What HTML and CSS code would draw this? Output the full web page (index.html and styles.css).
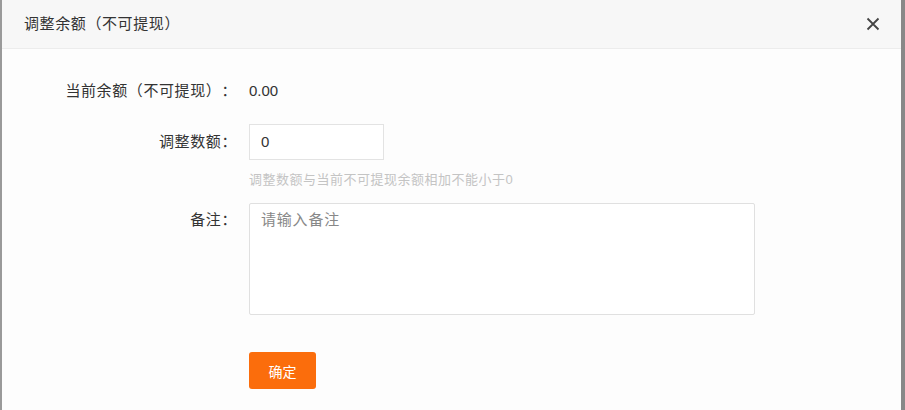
FILE: index.html
```html
<!DOCTYPE html>
<html lang="zh">
<head>
<meta charset="utf-8">
<link rel="stylesheet" href="styles.css">
</head>
<body>
<div class="dialog">
  <div class="dialog-header">
    <span class="dialog-title">调整余额（不可提现）</span>
    <button class="close" aria-label="关闭">
      <svg width="14" height="14" viewBox="0 0 14 14"><path d="M1.5 1.5 L12.5 12.5 M12.5 1.5 L1.5 12.5" stroke="#444" stroke-width="1.8" fill="none"/></svg>
    </button>
  </div>
  <div class="dialog-body">
    <div class="form-row row-static">
      <label class="label">当前余额（不可提现）：</label>
      <div class="control"><span class="value">0.00</span></div>
    </div>
    <div class="form-row row-amount">
      <label class="label">调整数额：</label>
      <div class="control">
        <div class="input">0</div>
        <div class="hint">调整数额与当前不可提现余额相加不能小于0</div>
      </div>
    </div>
    <div class="form-row row-note">
      <label class="label label-top">备注：</label>
      <div class="control">
        <div class="textarea"><span class="placeholder">请输入备注</span></div>
      </div>
    </div>
    <div class="form-row row-actions">
      <span class="label"></span>
      <div class="control"><button class="btn-primary">确定</button></div>
    </div>
  </div>
</div>
</body>
</html>
```

FILE: styles.css
```css
* { box-sizing: border-box; }
html, body { margin: 0; padding: 0; }
body {
  width: 905px;
  height: 410px;
  overflow: hidden;
  background: #fff;
  font-family: "Liberation Sans", "Noto Sans CJK SC", sans-serif;
  color: #333;
  text-spacing-trim: space-all;
}
.dialog {
  width: 905px;
  height: 410px;
  border-left: 2px solid #9a9a9a;
  border-right: 4px solid #888;
  background: #fdfdfd;
  display: flex;
  flex-direction: column;
}
.dialog-header {
  height: 49px;
  background: #f7f7f7;
  border-bottom: 1px solid #ececec;
  display: flex;
  align-items: center;
  justify-content: space-between;
  padding: 0 21px 0 22px;
}
.dialog-title {
  font-size: 15px;
  letter-spacing: 0.6px;
  color: #333;
  line-height: 20px;
}
.close {
  border: 0;
  background: transparent;
  padding: 0;
  width: 14px;
  height: 14px;
  display: flex;
  cursor: pointer;
}
.dialog-body {
  padding-top: 24px;
  display: flex;
  flex-direction: column;
}
.form-row {
  display: grid;
  grid-template-columns: 235px 1fr;
  column-gap: 12px;
}
.label {
  font-size: 15px;
  letter-spacing: 0.6px;
  line-height: 36px;
  text-align: right;
  color: #333;
}
.label-top { line-height: 20px; padding-top: 7px; }
.value {
  font-size: 15px;
  line-height: 36px;
  color: #333;
}
.row-amount { margin-top: 15px; }
.input {
  width: 135px;
  height: 36px;
  border: 1px solid #e3e3e3;
  background: #fff;
  font-size: 15px;
  line-height: 34px;
  padding-left: 11px;
  color: #333;
}
.hint {
  margin-top: 10px;
  font-size: 13px;
  letter-spacing: 0.5px;
  line-height: 20px;
  color: #c4c4c4;
}
.row-note { margin-top: 13px; }
.textarea {
  width: 506px;
  height: 112px;
  border: 1px solid #e0e0e0;
  border-radius: 2px;
  background: #fff;
  padding: 6px 11px;
}
.placeholder {
  font-size: 15px;
  letter-spacing: 0.8px;
  line-height: 20px;
  color: #888;
}
.row-actions { margin-top: 37px; }
.btn-primary {
  width: 67px;
  height: 37px;
  border: 0;
  border-radius: 3px;
  background: #fb6d0c;
  color: #fff;
  font-family: "Liberation Sans", "Noto Sans CJK SC", sans-serif;
  font-size: 14px;
  padding: 0;
  cursor: pointer;
}
```
